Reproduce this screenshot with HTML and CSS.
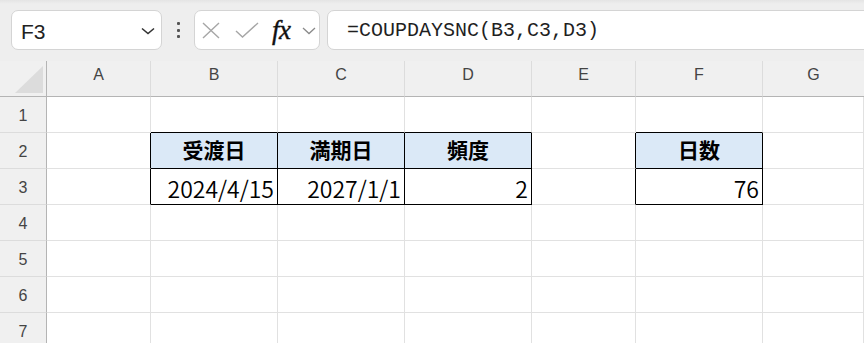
FILE: index.html
```html
<!DOCTYPE html>
<html lang="ja">
<head>
    <meta charset="UTF-8">
    <title>COUPDAYSNC</title>
    <link rel="stylesheet" href="styles.css">
</head>
<body>

    <div class="toolbar">
        <div class="namebox">
            <span class="ref">F3</span>
            <svg class="chev" width="14" height="8" viewBox="0 0 14 8"><path d="M1 1.5 L7 6.5 L13 1.5" fill="none" stroke="#333" stroke-width="1.6"/></svg>
        </div>
        <div class="dots"><i></i><i></i><i></i></div>
        <div class="fxbox">
            <svg class="ico-x" width="18" height="17" viewBox="0 0 18 17"><path d="M1 1 L17 16 M17 1 L1 16" fill="none" stroke="#a6a6a6" stroke-width="1.4"/></svg>
            <svg class="ico-ok" width="24" height="17" viewBox="0 0 24 17"><path d="M1 9 L7.5 15 L23 1" fill="none" stroke="#a6a6a6" stroke-width="1.4"/></svg>
            <span class="fx">fx</span>
            <svg class="ico-dd" width="14" height="8" viewBox="0 0 14 8"><path d="M1 1 L7 6.5 L13 1" fill="none" stroke="#8a8a8a" stroke-width="1.3"/></svg>
        </div>
        <div class="formula">=COUPDAYSNC(B3,C3,D3)</div>
    </div>

    <div class="sheet">
        <div class="corner"></div>
        <div class="colh">A</div>
        <div class="colh">B</div>
        <div class="colh">C</div>
        <div class="colh">D</div>
        <div class="colh">E</div>
        <div class="colh">F</div>
        <div class="colh last">G</div>

        <div class="rowh">1</div>
        <div class="cell"></div>
        <div class="cell bb"></div>
        <div class="cell bb"></div>
        <div class="cell bb"></div>
        <div class="cell"></div>
        <div class="cell bb"></div>
        <div class="cell"></div>

        <div class="rowh">2</div>
        <div class="cell rb"></div>
        <div class="cell hd">受渡日</div>
        <div class="cell hd">満期日</div>
        <div class="cell hd">頻度</div>
        <div class="cell rb"></div>
        <div class="cell hd">日数</div>
        <div class="cell"></div>

        <div class="rowh">3</div>
        <div class="cell rb"></div>
        <div class="cell val">2024/4/15</div>
        <div class="cell val">2027/1/1</div>
        <div class="cell val">2</div>
        <div class="cell rb"></div>
        <div class="cell val">76</div>
        <div class="cell"></div>

        <div class="rowh">4</div>
        <div class="cell"></div><div class="cell"></div><div class="cell"></div><div class="cell"></div>
        <div class="cell"></div><div class="cell"></div><div class="cell"></div>

        <div class="rowh">5</div>
        <div class="cell"></div><div class="cell"></div><div class="cell"></div><div class="cell"></div>
        <div class="cell"></div><div class="cell"></div><div class="cell"></div>

        <div class="rowh">6</div>
        <div class="cell"></div><div class="cell"></div><div class="cell"></div><div class="cell"></div>
        <div class="cell"></div><div class="cell"></div><div class="cell"></div>

        <div class="rowh">7</div>
        <div class="cell"></div><div class="cell"></div><div class="cell"></div><div class="cell"></div>
        <div class="cell"></div><div class="cell"></div><div class="cell"></div>
    </div>

</body>
</html>
```

FILE: styles.css
```css
* { box-sizing: border-box; }
body { margin: 0; background: #fff; font-family: "Liberation Sans", Arial, sans-serif; overflow: hidden; width: 864px; height: 343px; }

/* formula bar */
.toolbar { height: 61px; display: flex; align-items: flex-start; padding: 10px 0 0 11px; background: linear-gradient(to bottom, #e4e4e4 0, #eeeeee 4px, #eeeeee 100%); }
.namebox { width: 151px; height: 40px; background: #fff; border: 1px solid #d4d4d4; border-radius: 7px; display: flex; align-items: center; padding: 0 6px 0 9px; }
.namebox .ref { flex: 1; font-size: 21px; color: #222; padding-top: 3px; }
.namebox .chev { margin-top: 2px; }
.dots { width: 32px; height: 40px; display: flex; flex-direction: column; align-items: center; justify-content: center; gap: 3.5px; }
.dots i { display: block; width: 3px; height: 3px; background: #555; border-radius: 1px; }
.fxbox { width: 126px; height: 40px; background: #fff; border: 1px solid #d4d4d4; border-radius: 7px; display: flex; align-items: center; padding-left: 7px; }
.ico-x { margin-top: 1px; }
.ico-ok { margin-left: 15px; }
.fx { margin-left: 13px; width: 23px; font-family: "Liberation Serif", "Times New Roman", serif; font-style: italic; font-size: 27px; color: #111; letter-spacing: -0.5px; -webkit-text-stroke: 0.4px #111; }
.ico-dd { margin-left: 7px; margin-top: 2px; }
.formula { flex: 1; margin-left: 7px; margin-right: -12px; height: 40px; background: #fff; border: 1px solid #d4d4d4; border-radius: 7px; display: flex; align-items: center; padding-left: 19px; font-family: "Liberation Mono", "Courier New", monospace; font-size: 20px; color: #1f1f1f; }

/* grid */
.sheet { display: grid; grid-template-columns: 47px 104px 127px 127px 127px 104px 127px 1fr; grid-template-rows: repeat(8, 36px); background: #fff; }
.corner { position: relative; background: #f0f0f0; border-right: 1px solid #b4b4b4; border-bottom: 1px solid #b4b4b4; }
.corner::after { content: ""; position: absolute; left: 15px; top: 5px; width: 28px; height: 27px; background: #dcdcdc; clip-path: polygon(100% 0, 100% 100%, 0 100%); }
.colh { background: #f0f0f0; border-right: 1px solid #dcdcdc; border-bottom: 1px solid #b4b4b4; display: flex; justify-content: center; align-items: center; padding-bottom: 7px; font-size: 16px; color: #444; }
.colh.last { border-right: none; }
.rowh { background: #f0f0f0; border-right: 1px solid #b4b4b4; border-bottom: 1px solid #dcdcdc; display: flex; justify-content: center; align-items: center; padding-top: 2px; font-size: 16px; color: #444; }
.cell { border-right: 1px solid #e1e1e1; border-bottom: 1px solid #e1e1e1; display: flex; align-items: center; }
.cell.rb { border-right-color: #000; }
.cell.bb { border-bottom-color: #000; }
.cell.hd { background: #dbe9f7; border-right-color: #000; border-bottom-color: #000; justify-content: center; font-family: "Noto Sans CJK JP", sans-serif; font-weight: bold; font-size: 21px; color: #000; padding-bottom: 3px; }
.cell.val { border-right-color: #000; border-bottom-color: #000; justify-content: flex-end; padding: 2px 3px 0 0; font-family: "Noto Sans CJK JP", sans-serif; font-weight: 350; font-size: 23px; color: #000; }
```
